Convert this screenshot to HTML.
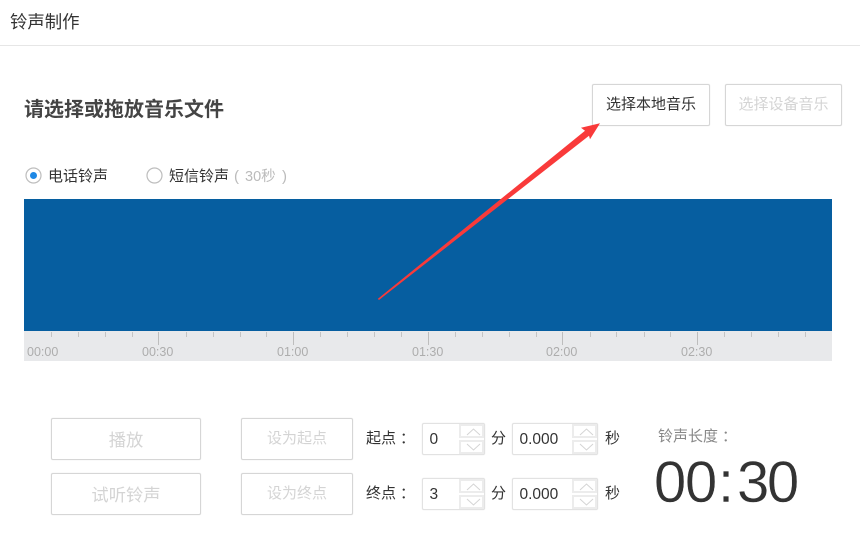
<!DOCTYPE html>
<html lang="zh">
<head>
<meta charset="utf-8">
<style>
html,body{margin:0;padding:0;background:#fff}
body{width:860px;height:547px;position:relative;overflow:hidden;font-family:"Liberation Sans","Noto Sans CJK SC",sans-serif;color:#333}
.a{position:absolute;white-space:nowrap}
.btn{position:absolute;box-sizing:border-box;border:1px solid #d6d6d6;border-radius:2px;box-shadow:0 0 1px #ddd;background:#fff;text-align:center;color:#d4d4d4;font-size:15px}
.inp{position:absolute;box-sizing:border-box;height:32px;border:1px solid #e2e2e2;border-radius:2px;background:#fff;font-size:15.5px;color:#333;box-shadow:0 0 1px #ddd}
.inp span{position:absolute;left:6.5px;top:7px;line-height:18px}
.sp{position:absolute;right:0;width:25px;height:14px;background:#fff;border:2px solid #ececec;box-sizing:border-box}
.sp svg{position:absolute;left:4px;top:1px}
.lb{font-size:15px;line-height:20px;color:#333}
.c{position:relative;left:4px}
.tk{position:absolute;top:332px;width:1px;height:5px;background:#c4c4c4}
.tm{position:absolute;top:332px;width:1px;height:13px;background:#bdbdbd}
.t{position:absolute;top:344px;font-size:12.5px;line-height:16px;color:#adadad}
.big{left:654px;top:450px;font-size:58px;line-height:66px;color:#333;-webkit-text-stroke:0.4px #fff}
.big b{font-weight:400;display:inline-block}
</style>
</head>
<body>
<div class="a" style="left:10px;top:11px;font-size:17.4px;line-height:22px;color:#333">铃声制作</div>
<div class="a" style="left:0;top:45px;width:860px;height:1px;background:#e6e6e6"></div>
<div class="a" style="left:24px;top:96px;font-size:20px;line-height:28px;font-weight:700;color:#444">请选择或拖放音乐文件</div>

<div class="btn" style="left:592px;top:84px;width:118px;height:42px;line-height:40px;color:#333">选择本地音乐</div>
<div class="btn" style="left:725px;top:84px;width:117px;height:42px;line-height:40px">选择设备音乐</div>

<svg class="a" style="left:24px;top:166px" width="140" height="20">
<circle cx="9.5" cy="9.5" r="7.5" fill="#fff" stroke="#bdbdbd" stroke-width="1.2"/>
<circle cx="9.5" cy="9.5" r="3.5" fill="#1e88e5"/>
<circle cx="130.5" cy="9.5" r="7.5" fill="#fff" stroke="#bdbdbd" stroke-width="1.2"/>
</svg>
<div class="a lb" style="left:48px;top:167px">电话铃声</div>
<div class="a lb" style="left:169px;top:167px">短信铃声</div>
<div class="a lb" style="left:234px;top:167px;color:#bbb">(</div>
<div class="a lb" style="left:245px;top:167px;color:#bbb;font-size:14.5px">30秒</div>
<div class="a lb" style="left:282px;top:167px;color:#bbb">)</div>

<div class="a" style="left:24px;top:199px;width:808px;height:132px;background:#065ea0"></div>
<div class="a" style="left:24px;top:331px;width:808px;height:30px;background:#e8e9eb"></div>

<i class="tk" style="left:51px"></i><i class="tk" style="left:78px"></i><i class="tk" style="left:105px"></i><i class="tk" style="left:132px"></i><i class="tm" style="left:158px"></i>
<i class="tk" style="left:186px"></i><i class="tk" style="left:213px"></i><i class="tk" style="left:240px"></i><i class="tk" style="left:266px"></i><i class="tm" style="left:293px"></i>
<i class="tk" style="left:320px"></i><i class="tk" style="left:347px"></i><i class="tk" style="left:374px"></i><i class="tk" style="left:401px"></i><i class="tm" style="left:428px"></i>
<i class="tk" style="left:455px"></i><i class="tk" style="left:482px"></i><i class="tk" style="left:509px"></i><i class="tk" style="left:536px"></i><i class="tm" style="left:562px"></i>
<i class="tk" style="left:590px"></i><i class="tk" style="left:616px"></i><i class="tk" style="left:644px"></i><i class="tk" style="left:670px"></i><i class="tm" style="left:697px"></i>
<i class="tk" style="left:724px"></i><i class="tk" style="left:751px"></i><i class="tk" style="left:778px"></i><i class="tk" style="left:805px"></i>

<div class="t" style="left:27px">00:00</div>
<div class="t" style="left:142px">00:30</div>
<div class="t" style="left:277px">01:00</div>
<div class="t" style="left:412px">01:30</div>
<div class="t" style="left:546px">02:00</div>
<div class="t" style="left:681px">02:30</div>

<div class="btn" style="left:51px;top:418px;width:150px;height:42px;line-height:42px;font-size:17.3px">播放</div>
<div class="btn" style="left:51px;top:473px;width:150px;height:42px;line-height:42px;font-size:17.3px">试听铃声</div>
<div class="btn" style="left:241px;top:418px;width:112px;height:42px;line-height:40px">设为起点</div>
<div class="btn" style="left:241px;top:473px;width:112px;height:42px;line-height:40px">设为终点</div>

<div class="a lb" style="left:366px;top:429px">起点<span class="c">：</span></div>
<div class="a lb" style="left:366px;top:484px">终点<span class="c">：</span></div>

<div class="inp" style="left:422px;top:423px;width:63px"><span>0</span>
  <div class="sp" style="top:0"><svg width="17" height="10"><path d="M2 8L8.500 2L15 8" fill="none" stroke="#d4d4d4"/></svg></div>
  <div class="sp" style="top:16px"><svg width="17" height="10"><path d="M2 1L8.500 7L15 1" fill="none" stroke="#d4d4d4"/></svg></div>
</div>
<div class="a lb" style="left:491px;top:429px">分</div>
<div class="inp" style="left:512px;top:423px;width:86px"><span>0.000</span>
  <div class="sp" style="top:0"><svg width="17" height="10"><path d="M2 8L8.500 2L15 8" fill="none" stroke="#d4d4d4"/></svg></div>
  <div class="sp" style="top:16px"><svg width="17" height="10"><path d="M2 1L8.500 7L15 1" fill="none" stroke="#d4d4d4"/></svg></div>
</div>
<div class="a lb" style="left:605px;top:429px">秒</div>

<div class="inp" style="left:422px;top:478px;width:63px"><span>3</span>
  <div class="sp" style="top:0"><svg width="17" height="10"><path d="M2 8L8.500 2L15 8" fill="none" stroke="#d4d4d4"/></svg></div>
  <div class="sp" style="top:16px"><svg width="17" height="10"><path d="M2 1L8.500 7L15 1" fill="none" stroke="#d4d4d4"/></svg></div>
</div>
<div class="a lb" style="left:491px;top:484px">分</div>
<div class="inp" style="left:512px;top:478px;width:86px"><span>0.000</span>
  <div class="sp" style="top:0"><svg width="17" height="10"><path d="M2 8L8.500 2L15 8" fill="none" stroke="#d4d4d4"/></svg></div>
  <div class="sp" style="top:16px"><svg width="17" height="10"><path d="M2 1L8.500 7L15 1" fill="none" stroke="#d4d4d4"/></svg></div>
</div>
<div class="a lb" style="left:605px;top:484px">秒</div>

<div class="a lb" style="left:658px;top:427px;color:#888">铃声长度<span class="c">：</span></div>
<div class="a big"><b style="width:31px">0</b><b style="width:33px">0</b><b style="width:19px">:</b><b style="width:30px">3</b><b>0</b></div>

<svg class="a" style="left:0;top:0;pointer-events:none" width="860" height="547">
<path d="M377.800 298.900L585 130.700L581 127.700L600 123.300L590 139.300L589 135.700L379 300Z" fill="#f93a3a"/>
</svg>
</body>
</html>
